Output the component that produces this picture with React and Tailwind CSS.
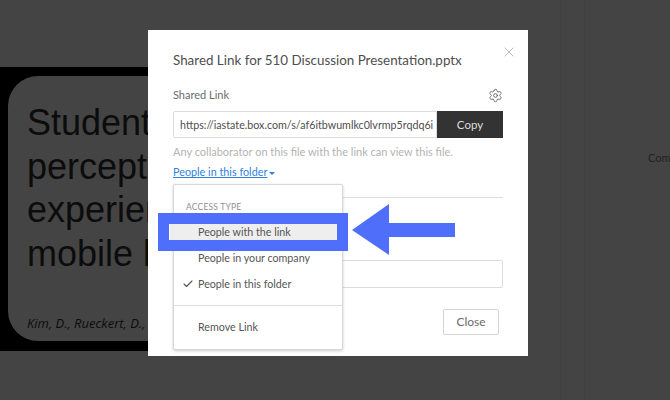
import React from "react";
import { Settings, X, Check } from "lucide-react";

export default function App() {
  return (
    <div className="relative w-[670px] h-[400px] overflow-hidden bg-[#444444] font-['Lato','Liberation_Sans',sans-serif]">
      {/* page behind the dim layer */}
      <div className="flex h-full">
        <div className="w-[148px] shrink-0 pt-[67px]">
          <div className="w-[148px] h-[284px] bg-black pl-[8px] py-[9px] overflow-hidden">
            <div className="w-[200px] h-[265px] rounded-l-[30px] bg-[#444444] pl-[19px] pt-[25px] overflow-hidden">
              <p className="font-['Liberation_Sans',sans-serif] text-[36px] leading-[43.5px] text-[#0c0c0c] whitespace-nowrap">
                Students'<br />perceptions<br />experience<br />mobile learning
              </p>
              <p className="mt-[40px] font-['Open_Sans',sans-serif] italic text-[13px] leading-[16px] text-[#0c0c0c] whitespace-nowrap">
                Kim, D., Rueckert, D., Kim, D.
              </p>
            </div>
          </div>
        </div>
        <div className="w-[413px] shrink-0 border-r border-[#404040]" />
        <div className="w-[24px] shrink-0 border-r border-[#404040]" />
        <div className="flex-1 pl-[63px] pt-[150px] text-[11px] leading-[15px] text-[#222222] whitespace-nowrap">Com</div>
      </div>

      {/* modal */}
      <div className="absolute left-[148px] top-[30px] w-[380px] h-[326px] bg-white pl-[25px] pr-[25px] pt-[21px] text-[#4e4e4e]">
        <X className="absolute right-[11px] top-[14px] text-[#b5b5b5]" size={16} strokeWidth={1.4} />
        <h2 className="text-[13.4px] leading-[18px] font-normal text-[#4e4e4e] whitespace-nowrap">
          Shared Link for 510 Discussion Presentation.pptx
        </h2>
        <div className="mt-[16px] flex items-center justify-between h-[20px]">
          <span className="text-[11px] leading-[16px] text-[#6b6b6b]">Shared Link</span>
          <Settings className="text-[#555555]" size={15} strokeWidth={1.3} />
        </div>
        <div className="mt-[6px] flex h-[27px]">
          <div className="w-[264px] border border-[#dcdcdc] rounded-l-[2px] pl-[6px] text-[10.7px] leading-[25px] text-[#4e4e4e] whitespace-nowrap overflow-hidden">
            https://iastate.box.com/s/af6itbwumlkc0lvrmp5rqdq6i
          </div>
          <div className="w-[66px] bg-[#333333] text-[#dddddd] text-[11.5px] leading-[27px] text-center">Copy</div>
        </div>
        <p className="mt-[6px] text-[11px] leading-[15px] text-[#b3b3b3] whitespace-nowrap">
          Any collaborator on this file with the link can view this file.
        </p>
        <div className="mt-[6px] flex items-center h-[15px] text-[10.8px] text-[#2f7fe0]">
          <span className="underline">People in this folder</span>
          <span className="ml-[2px] mt-[2px] border-x-[3px] border-t-[3px] border-x-transparent border-t-[#2f7fe0]" />
        </div>
        <div className="mt-[17px] border-t border-[#dddddd]" />
        <div className="mt-[62px] h-[28px] border border-[#dcdcdc] rounded-[2px]" />
        <div className="mt-[21px] flex justify-end pr-[4px]">
          <div className="w-[56px] h-[26px] border border-[#d5d5d5] rounded-[2px] text-[12px] leading-[24px] text-center text-[#6b6b6b]">Close</div>
        </div>
      </div>

      {/* dropdown */}
      <div className="absolute left-[173px] top-[184px] w-[170px] h-[166px] bg-white border border-[#d8d8d8] rounded-[2px] shadow-[0_1px_3px_rgba(0,0,0,0.2)] pt-[16px] text-[10.7px] text-[#555555]">
        <div className="pl-[12px] text-[8.5px] leading-[12px] tracking-[0.2px] text-[#8f8f8f]">ACCESS TYPE</div>
        <div className="mt-[11px] h-[16px] mx-[-4px] pl-[28px] bg-[#eeeeee] leading-[16px]">People with the link</div>
        <div className="mt-[10px] h-[16px] pl-[24px] leading-[16px]">People in your company</div>
        <div className="mt-[10px] h-[16px] pl-[24px] leading-[16px] relative">
          <Check className="absolute left-[8px] top-[2px] text-[#555555]" size={12} strokeWidth={2.2} />
          People in this folder
        </div>
        <div className="mt-[13px] border-t border-[#dddddd]" />
        <div className="mt-[13px] h-[16px] pl-[24px] leading-[16px]">Remove Link</div>
      </div>

      {/* annotation */}
      <div className="absolute left-[158px] top-[213px] w-[190px] h-[38px] border-[11px] border-[#4f6ffb]" />
      <svg className="absolute left-[350px] top-[202px]" width="108" height="56" viewBox="0 0 108 56">
        <polygon points="2,28 39,2 39,21 105,21 105,35 39,35 39,53" fill="#4f6ffb" />
      </svg>
    </div>
  );
}
